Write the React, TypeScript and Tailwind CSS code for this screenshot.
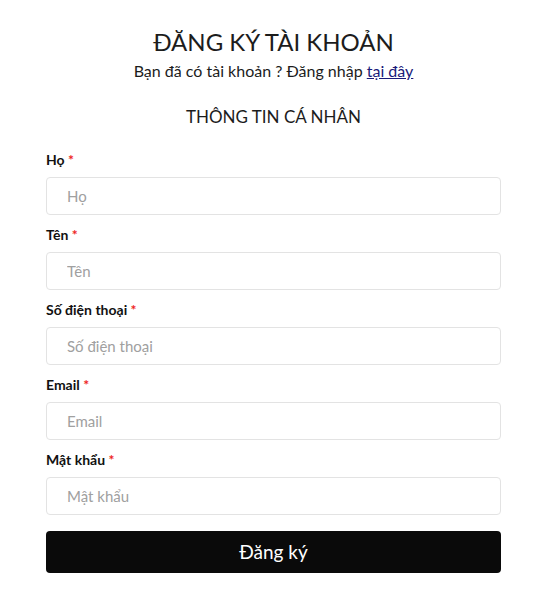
import React from 'react';

const fields = [
  { label: 'Họ', type: 'text' },
  { label: 'Tên', type: 'text' },
  { label: 'Số điện thoại', type: 'tel' },
  { label: 'Email', type: 'email' },
  { label: 'Mật khẩu', type: 'password' },
];

export default function App() {
  return (
    <div className="min-h-[600px] bg-white text-[#222] font-['Lato','Noto_Sans',sans-serif]">
      <div className="ml-[46px] w-[455px] pt-[26px]">
        <h1 className="text-center text-[24px] leading-[32px] font-normal text-[#1c1c1c]">ĐĂNG KÝ TÀI KHOẢN</h1>
        <p className="mt-[3px] text-center text-[16px] leading-[20px] text-[#1c1c1c]">
          Bạn đã có tài khoản ? Đăng nhập{' '}
          <a href="#" className="text-[#1a1a7a] underline">tại đây</a>
        </p>
        <h2 className="mt-[24px] text-center text-[17px] leading-[24px] text-[#1c1c1c]">THÔNG TIN CÁ NHÂN</h2>

        <form className="mt-[20.5px] flex flex-col gap-[9.5px]" onSubmit={e => e.preventDefault()}>
          {fields.map(f => (
            <div key={f.label} className="flex flex-col">
              <label className="text-[14px] leading-[20px] font-bold text-[#111] mb-[7.5px]">
                {f.label} <span className="text-[#ee2222]">*</span>
              </label>
              <input
                type={f.type === 'password' ? 'text' : f.type}
                placeholder={f.label}
                className="h-[38px] w-full rounded-[4px] border border-[#e3e3e3] bg-white px-[20px] text-[15px] outline-none placeholder:text-[#a0a0a0]"
              />
            </div>
          ))}
          <button
            type="submit"
            className="mt-[6.5px] h-[42px] w-full rounded-[4px] bg-[#0a0a0a] text-[19px] text-white"
          >
            Đăng ký
          </button>
        </form>
      </div>
    </div>
  );
}
